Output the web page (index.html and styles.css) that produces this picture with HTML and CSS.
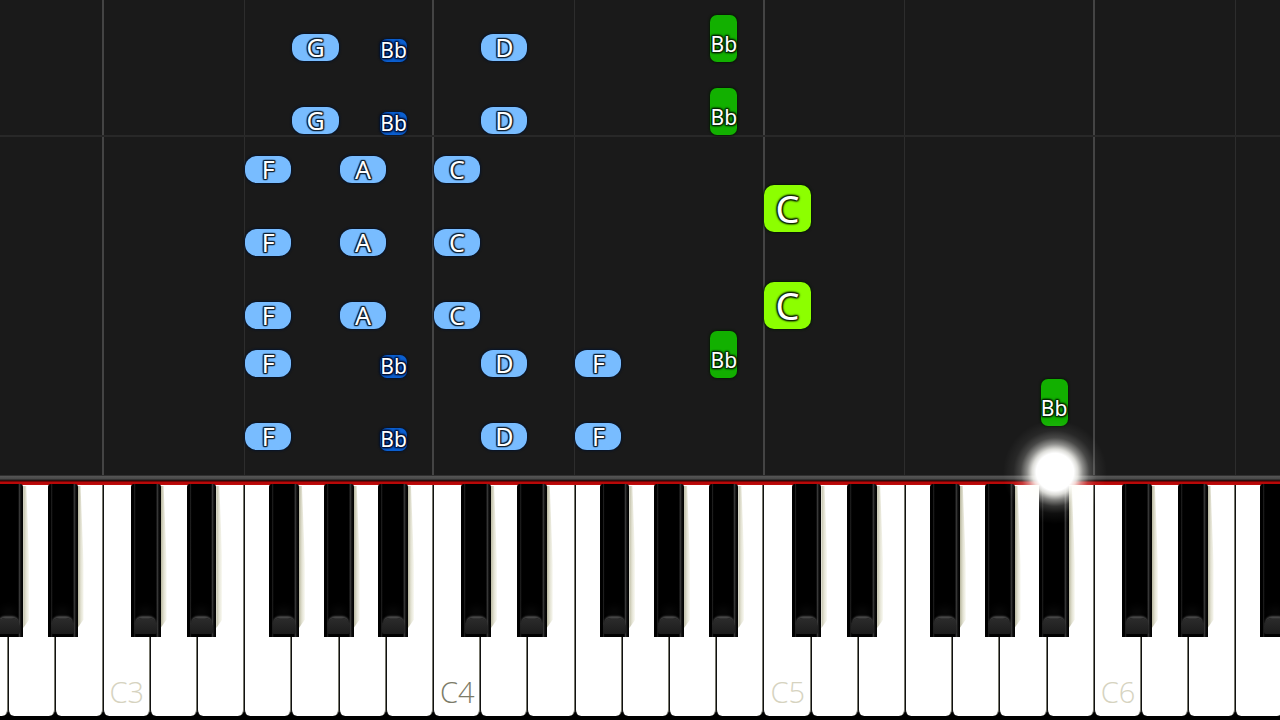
FILE: index.html
```
<!DOCTYPE html>
<html lang="en">
<head>
<meta charset="utf-8">
<title>Piano roll</title>
<link rel="stylesheet" href="styles.css">
</head>
<body>
<main class="app">
  <section class="roll" aria-label="Falling notes">
    <div class="lanes">
      <div class="lane three"></div>
      <div class="lane three octave"></div><div class="lane four"></div>
      <div class="lane three octave"></div><div class="lane four"></div>
      <div class="lane three octave"></div><div class="lane four"></div>
      <div class="lane three octave"></div><div class="lane one"></div>
    </div>
    <div class="bar"></div>

    <div class="note left g3 r1">G</div>
    <div class="note left flat bb3 f1">Bb</div>
    <div class="note left d4 r1">D</div>
    <div class="note right flat bb4 h1">Bb</div>

    <div class="note left g3 r2">G</div>
    <div class="note left flat bb3 f2">Bb</div>
    <div class="note left d4 r2">D</div>
    <div class="note right flat bb4 h2">Bb</div>

    <div class="note left f3 r3">F</div>
    <div class="note left a3 r3">A</div>
    <div class="note left c4 r3">C</div>
    <div class="note right c5 h3">C</div>

    <div class="note left f3 r4">F</div>
    <div class="note left a3 r4">A</div>
    <div class="note left c4 r4">C</div>
    <div class="note right c5 h4">C</div>

    <div class="note left f3 r5">F</div>
    <div class="note left a3 r5">A</div>
    <div class="note left c4 r5">C</div>

    <div class="note left f3 r6">F</div>
    <div class="note left flat bb3 f6">Bb</div>
    <div class="note left d4 r6">D</div>
    <div class="note left f4 r6">F</div>
    <div class="note right flat bb4 h5">Bb</div>

    <div class="note left f3 r7">F</div>
    <div class="note left flat bb3 f7">Bb</div>
    <div class="note left d4 r7">D</div>
    <div class="note left f4 r7">F</div>
    <div class="note right flat bb5 h6">Bb</div>
  </section>

  <div class="rail"></div>

  <section class="keyboard" aria-label="Keyboard">
    <div class="slot"><button class="white" aria-label="G2"></button><button class="black gs" aria-label="G sharp 2"></button></div>
    <div class="slot"><button class="white" aria-label="A2"></button><button class="black as" aria-label="B flat 2"></button></div>
    <div class="slot"><button class="white" aria-label="B2"></button></div>

    <div class="slot"><button class="white">C3</button><button class="black cs" aria-label="C sharp 3"></button></div>
    <div class="slot"><button class="white" aria-label="D3"></button><button class="black ds" aria-label="D sharp 3"></button></div>
    <div class="slot"><button class="white" aria-label="E3"></button></div>
    <div class="slot"><button class="white" aria-label="F3"></button><button class="black fs" aria-label="F sharp 3"></button></div>
    <div class="slot"><button class="white" aria-label="G3"></button><button class="black gs" aria-label="G sharp 3"></button></div>
    <div class="slot"><button class="white" aria-label="A3"></button><button class="black as" aria-label="B flat 3"></button></div>
    <div class="slot"><button class="white" aria-label="B3"></button></div>

    <div class="slot"><button class="white middle">C4</button><button class="black cs" aria-label="C sharp 4"></button></div>
    <div class="slot"><button class="white" aria-label="D4"></button><button class="black ds" aria-label="D sharp 4"></button></div>
    <div class="slot"><button class="white" aria-label="E4"></button></div>
    <div class="slot"><button class="white" aria-label="F4"></button><button class="black fs" aria-label="F sharp 4"></button></div>
    <div class="slot"><button class="white" aria-label="G4"></button><button class="black gs" aria-label="G sharp 4"></button></div>
    <div class="slot"><button class="white" aria-label="A4"></button><button class="black as" aria-label="B flat 4"></button></div>
    <div class="slot"><button class="white" aria-label="B4"></button></div>

    <div class="slot"><button class="white">C5</button><button class="black cs" aria-label="C sharp 5"></button></div>
    <div class="slot"><button class="white" aria-label="D5"></button><button class="black ds" aria-label="D sharp 5"></button></div>
    <div class="slot"><button class="white" aria-label="E5"></button></div>
    <div class="slot"><button class="white" aria-label="F5"></button><button class="black fs" aria-label="F sharp 5"></button></div>
    <div class="slot"><button class="white" aria-label="G5"></button><button class="black gs" aria-label="G sharp 5"></button></div>
    <div class="slot"><button class="white" aria-label="A5"></button><button class="black as" aria-label="B flat 5"></button><span class="glow"></span></div>
    <div class="slot"><button class="white" aria-label="B5"></button></div>

    <div class="slot"><button class="white">C6</button><button class="black cs" aria-label="C sharp 6"></button></div>
    <div class="slot"><button class="white" aria-label="D6"></button><button class="black ds" aria-label="D sharp 6"></button></div>
    <div class="slot"><button class="white" aria-label="E6"></button></div>
    <div class="slot"><button class="white" aria-label="F6"></button><button class="black fs" aria-label="F sharp 6"></button></div>
  </section>
</main>
</body>
</html>
```
FILE: styles.css
```
* { box-sizing: border-box; }

body {
  margin: 0;
  background: #000;
  font-family: "Open Sans", "Noto Sans", sans-serif;
}

/* Seven white keys span 25.8% of the window; the first one starts off-screen. */
.app {
  --start: -3.05%;
  --span: 103.25%;
  display: flex;
  flex-direction: column;
  min-height: 100vh;
  overflow: hidden;
}

/* Note area */
.roll {
  position: relative;
  flex: 1;
  min-height: 460px;
  background: #1a1a1a;
}

.lanes {
  position: absolute;
  inset: 0;
  display: flex;
  width: var(--span);
  margin-left: -3.1%;
}

.lane { flex: none; border-left: 1px solid #2d2d2d; }
.octave { border-left: 2px solid #444; }
.one { width: calc(1 / 28 * 100%); }
.three { width: calc(3 / 28 * 100%); }
.four { width: calc(4 / 28 * 100%); }

.bar {
  position: absolute;
  inset: 135px 0 auto;
  height: 2px;
  background: #282828;
}

.note {
  position: absolute;
  display: flex;
  align-items: center;
  justify-content: center;
  width: 3.6%;
  padding-bottom: 1px;
  color: #fff;
  font-family: "Noto Sans", sans-serif;
}

.left {
  height: 27px;
  border-radius: 12px;
  background: #78bcff;
  box-shadow: 0 0 2px 1px #06142b;
  font-size: 25px;
  text-shadow: 1px 0 1px #123, -1px 0 1px #123, 0 1px 1px #123, 0 -1px 1px #123, 1px 1px 1px #123, -1px -1px 1px #123, 1px -1px 1px #123, -1px 1px 1px #123;
}

.right {
  height: 47px;
  border-radius: 10px;
  background: #8cff00;
  box-shadow: 0 0 2px 1px #071b05;
  font-size: 38px;
  text-shadow: 1px 0 1px #142b00, -1px 0 1px #142b00, 0 1px 1px #142b00, 0 -1px 1px #142b00, 1px 1px 2px #142b00, -1px -1px 2px #142b00, 1px -1px 2px #142b00, -1px 1px 2px #142b00;
}

.flat { width: 2.1%; font-size: 21px; }
.left.flat {
  height: 23px;
  padding-bottom: 2px;
  border-radius: 7px;
  background: #0b5fd0;
  text-shadow: 1px 0 1px #001237, -1px 0 1px #001237, 0 1px 1px #001237, 0 -1px 1px #001237, 1px 1px 2px #001237, -1px -1px 2px #001237, 1px -1px 2px #001237, -1px 1px 2px #001237;
}
.right.flat {
  align-items: flex-end;
  padding-bottom: 4px;
  border-radius: 7px;
  background: #12b000;
  line-height: 28px;
  text-shadow: 1px 0 1px #062800, -1px 0 1px #062800, 0 1px 1px #062800, 0 -1px 1px #062800, 1px 1px 2px #062800, -1px -1px 2px #062800, 1px -1px 2px #062800, -1px 1px 2px #062800;
}

/* Pitch positions */
.f3 { left: 19.15%; }
.g3 { left: 22.85%; }
.a3 { left: 26.55%; }
.bb3 { left: 29.7%; }
.c4 { left: 33.9%; }
.d4 { left: 37.6%; }
.f4 { left: 44.95%; }
.bb4 { left: 55.5%; }
.c5 { left: 59.7%; width: 3.65%; }
.bb5 { left: 81.3%; }

/* Time positions */
.r1 { top: 34px; }
.r2 { top: 107px; }
.r3 { top: 156px; }
.r4 { top: 229px; }
.r5 { top: 302px; }
.r6 { top: 350px; }
.r7 { top: 423px; }
.f1 { top: 39px; }
.f2 { top: 112px; }
.f6 { top: 355px; }
.f7 { top: 428px; }
.h1 { top: 15px; }
.h2 { top: 88px; }
.h3 { top: 185px; }
.h4 { top: 282px; }
.h5 { top: 331px; }
.h6 { top: 379px; }

/* Strip between the notes and the keys */
.rail {
  height: 10px;
  background: linear-gradient(#303030 0 1px, #565656 1px, #484848 4px, #202020 5px, #300 6px, #b80808 7px 9px, #c81010 10px);
}

/* Keyboard */
.keyboard {
  display: flex;
  width: var(--span);
  height: 235px;
  margin-left: var(--start);
  padding-bottom: 4px;
  background: #000;
}

.slot { position: relative; flex: 1; }

.white {
  display: flex;
  align-items: flex-end;
  width: 100%;
  height: 100%;
  padding: 0 0 2px 6px;
  border: 0;
  border-left: 1px solid #111;
  border-right: 1px solid #77776c;
  border-radius: 0 0 6px 6px;
  background: #fff;
  color: #d6d3c0;
  font: 300 29px/44px "Open Sans", "Noto Sans", sans-serif;
}
.middle { color: #7c7b68; }

.black {
  position: absolute;
  z-index: 1;
  top: -1px;
  width: 63%;
  height: 153px;
  padding: 0;
  border: 0;
  border-radius: 3px 3px 0 0;
  background: linear-gradient(90deg, #000 0 9%, #1e1e1e 12%, #000 16% 83%, #383838 88%, #0c0c0c 93%, #000);
}
.black::before {
  content: "";
  position: absolute;
  z-index: -1;
  top: 2px;
  right: -6px;
  width: 6px;
  height: 142px;
  background: linear-gradient(90deg, #b9b8a0, #e4e3d4 50%, #fafaf3);
  clip-path: polygon(0 0, 50% 0, 100% 55%, 100% 94%, 0 100%);
}
/* Sloped front of the key */
.black::after {
  content: "";
  position: absolute;
  right: 11%;
  bottom: 3px;
  left: 11%;
  height: 15px;
  border-top: 1px solid #333;
  border-radius: 8px 8px 2px 2px;
  background: linear-gradient(#2b2b2b, #1c1c1c);
  box-shadow: 0 -3px 2px -1px #4a4a4a, 0 -14px 10px -6px #1c1c1c;
  clip-path: inset(-24px 0 0 0);
}

.cs { left: 60%; }
.ds { left: 78%; }
.fs { left: 53%; }
.gs { left: 69%; }
.as { left: 84%; }

/* Light over the sounding key */
.glow {
  position: absolute;
  z-index: 2;
  top: -65px;
  left: calc(117% - 52px);
  width: 104px;
  height: 104px;
  border-radius: 50%;
  background: radial-gradient(circle closest-side, #fff 0 36%, rgba(255, 255, 250, .85) 44%, rgba(255, 255, 250, .5) 54%, rgba(255, 255, 250, .2) 66%, rgba(255, 255, 250, .06) 80%, transparent);
}
```
